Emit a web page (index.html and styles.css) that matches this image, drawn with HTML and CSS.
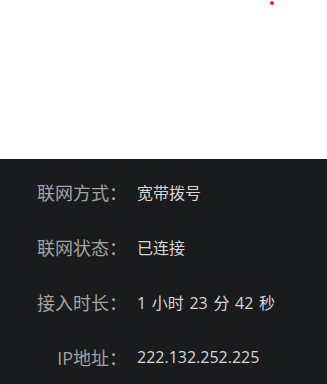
FILE: index.html
```html
<!DOCTYPE html>
<html lang="zh-CN">
<head>
<meta charset="utf-8">
<link rel="stylesheet" href="styles.css">
</head>
<body>
<div class="top">
  <span class="dot"></span>
</div>
<div class="panel">
  <div class="row"><span class="label">联网方式：</span><span class="value">宽带拨号</span></div>
  <div class="row"><span class="label">联网状态：</span><span class="value">已连接</span></div>
  <div class="row"><span class="label">接入时长：</span><span class="value">1 小时 23 分 42 秒</span></div>
  <div class="row"><span class="label">IP地址：</span><span class="value">222.132.252.225</span></div>
</div>
</body>
</html>
```

FILE: styles.css
```css
html, body {
  margin: 0;
  padding: 0;
  background: #ffffff;
  font-family: "Open Sans", "Noto Sans CJK SC", sans-serif;
}
.top {
  position: relative;
  height: 159px;
  background: #ffffff;
}
.dot {
  position: absolute;
  left: 270px;
  top: 1px;
  width: 4px;
  height: 4px;
  border-radius: 50%;
  background: #e8262a;
}
.panel {
  background: #1a1b1d;
  padding-top: 5px;
  height: 220px;
}
.row {
  display: flex;
  align-items: center;
  height: 55px;
}
.label {
  width: 127px;
  text-align: right;
  font-size: 18px;
  color: #a3a3a3;
}
.value {
  margin-left: 10px;
  font-size: 16px;
  word-spacing: 1.5px;
  color: #d6d6d6;
}
```
